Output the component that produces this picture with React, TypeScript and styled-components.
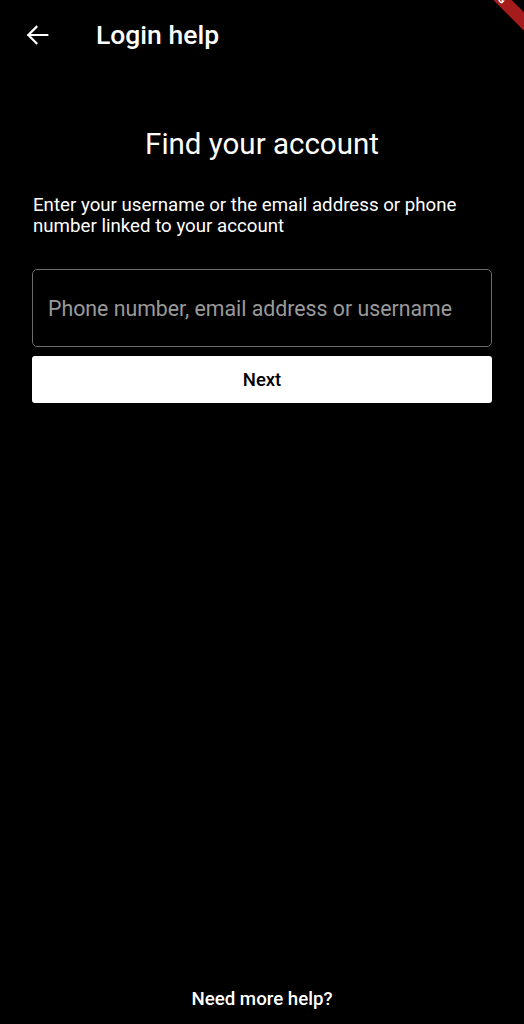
import React from "react";
import styled, { createGlobalStyle } from "styled-components";

const Global = createGlobalStyle`
  html, body { margin: 0; padding: 0; background: #000; }
  body { font-family: Roboto, "Noto Sans", sans-serif; color: #fff; }
  * { box-sizing: border-box; }
`;

const Screen = styled.div`
  position: relative;
  width: 524px;
  height: 1024px;
  background: #000;
  display: flex;
  flex-direction: column;
  overflow: hidden;
`;

const AppBar = styled.header`
  height: 70px;
  display: flex;
  align-items: center;
  padding-left: 24px;
  gap: 24px;
`;

const BackButton = styled.button`
  width: 26px;
  height: 26px;
  padding: 0;
  border: none;
  background: transparent;
  color: #fff;
  display: flex;
  align-items: center;
  justify-content: center;
`;

const AppTitle = styled.h1`
  margin: -2px 0 0 22px;
  font-size: 26.5px;
  font-weight: 500;
`;

const Body = styled.main`
  flex: 1;
  display: flex;
  flex-direction: column;
  padding: 56px 32px 0 32px;
`;

const Heading = styled.h2`
  margin: 0;
  text-align: center;
  font-size: 29.5px;
  font-weight: 400;
  line-height: 36px;
`;

const Description = styled.p`
  margin: 33px 0 0 1px;
  font-size: 18.7px;
  line-height: 21px;
`;

const Field = styled.input`
  margin-top: 32px;
  width: 100%;
  height: 78px;
  border: 1px solid #6b6b6b;
  border-radius: 5px;
  background: #000;
  color: #fff;
  padding: 0 15px;
  font-family: Roboto, sans-serif;
  font-size: 21.3px;
  outline: none;
  &::placeholder { color: #9a9a9a; }
`;

const NextButton = styled.button`
  margin-top: 9px;
  width: 100%;
  height: 47px;
  border: none;
  border-radius: 3px;
  background: #fff;
  color: #000;
  font-family: Roboto, sans-serif;
  font-size: 18.5px;
  font-weight: 500;
`;

const Footer = styled.footer`
  height: 50px;
  display: flex;
  align-items: flex-start;
  justify-content: center;
  padding-top: 14px;
  font-size: 18.7px;
  font-weight: 500;
`;

const Banner = styled.div`
  position: absolute;
  top: -17.5px;
  right: -23px;
  width: 110px;
  height: 13px;
  background: #a61b1b;
  color: #fff;
  transform: rotate(45deg);
  transform-origin: center;
  font-size: 10px;
  font-weight: 900;
  line-height: 13px;
  text-align: center;
  letter-spacing: 1px;
`;

export default function App() {
  return (
    <>
      <Global />
      <Screen>
        <AppBar>
          <BackButton aria-label="Back">
            <svg width="26" height="26" viewBox="0 0 24 24" fill="none">
              <path d="M21.5 12H4M11.5 4.5L4 12l7.5 7.5" stroke="#fff" strokeWidth="2" strokeLinecap="square" />
            </svg>
          </BackButton>
          <AppTitle>Login help</AppTitle>
        </AppBar>
        <Body>
          <Heading>Find your account</Heading>
          <Description>
            Enter your username or the email address or phone number linked to your account
          </Description>
          <Field placeholder="Phone number, email address or username" />
          <NextButton>Next</NextButton>
        </Body>
        <Footer>Need more help?</Footer>
        <Banner>DEBUG</Banner>
      </Screen>
    </>
  );
}
